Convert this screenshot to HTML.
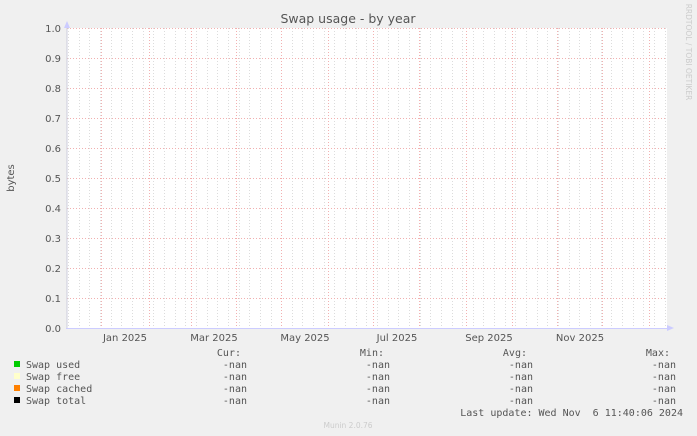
<!DOCTYPE html>
<html><head><meta charset="utf-8"><style>
html,body{margin:0;padding:0;background:#f0f0f0;}
svg{display:block}
text{font-family:"DejaVu Sans","Liberation Sans",sans-serif;fill:#555}
.m{font-family:"DejaVu Sans Mono","Liberation Mono",monospace;font-size:10px;fill:#555;white-space:pre}
</style></head><body>
<svg id="s" width="697" height="436" xmlns="http://www.w3.org/2000/svg">
<rect x="67" y="28" width="600" height="300" fill="#fff"/>
<g id="g"></g>
<line x1="67" y1="24" x2="67" y2="329" stroke="#ccd" stroke-width="1"/>
<line x1="66" y1="328.5" x2="670" y2="328.5" stroke="#ccf" stroke-width="1"/>
<polygon points="64,28 70,28 67,21" fill="#ccf"/>
<polygon points="667,325 667,331 674,328" fill="#ccf"/>
<text x="348" y="23" font-size="12.5" text-anchor="middle">Swap usage - by year</text>
<g font-size="10" text-anchor="end">
<text x="61" y="32">1.0</text><text x="61" y="62">0.9</text><text x="61" y="92">0.8</text><text x="61" y="122">0.7</text><text x="61" y="152">0.6</text><text x="61" y="182">0.5</text><text x="61" y="212">0.4</text><text x="61" y="242">0.3</text><text x="61" y="272">0.2</text><text x="61" y="302">0.1</text><text x="61" y="332">0.0</text>
</g>
<text x="14" y="178" font-size="10" text-anchor="middle" transform="rotate(-90 14 178)">bytes</text>
<g font-size="10" text-anchor="middle">
<text x="125" y="341">Jan 2025</text><text x="214" y="341">Mar 2025</text><text x="305" y="341">May 2025</text><text x="397" y="341">Jul 2025</text><text x="489" y="341">Sep 2025</text><text x="580" y="341">Nov 2025</text>
</g>
<text x="686" y="52" font-size="7.5" style="fill:#ccc" text-anchor="middle" transform="rotate(90 686 52)">RRDTOOL / TOBI OETIKER</text>
<rect x="14" y="361" width="6" height="6" fill="#00cc00"/>
<rect x="14" y="373" width="6" height="6" fill="#ffffcc"/>
<rect x="14" y="385" width="6" height="6" fill="#ff8000"/>
<rect x="14" y="397" width="6" height="6" fill="#000"/>
<text class="m" x="26" y="368">Swap used</text>
<text class="m" x="26" y="380">Swap free</text>
<text class="m" x="26" y="392">Swap cached</text>
<text class="m" x="26" y="404">Swap total</text>
<g class="m" text-anchor="end">
<text class="m" x="241" y="356">Cur:</text><text class="m" x="384" y="356">Min:</text><text class="m" x="527" y="356">Avg:</text><text class="m" x="670" y="356">Max:</text>
</g>
<g id="nan"></g>
<text class="m" x="683" y="416" text-anchor="end" xml:space="preserve">Last update: Wed Nov  6 11:40:06 2024</text>
<text x="348" y="428" font-size="7.5" style="fill:#ccc" text-anchor="middle">Munin 2.0.76</text>
</svg>
<script>
var ns="http://www.w3.org/2000/svg",g=document.getElementById("g");
function L(x1,y1,x2,y2,c){var l=document.createElementNS(ns,"line");l.setAttribute("x1",x1);l.setAttribute("y1",y1);l.setAttribute("x2",x2);l.setAttribute("y2",y2);l.setAttribute("stroke",c);l.setAttribute("stroke-width","1");l.setAttribute("stroke-dasharray","1,2");g.appendChild(l);}
for(var x=68.15;x<667;x+=10.65){var xx=Math.round(x)+0.5;L(xx,28,xx,328,"#dcdcdc");}
for(var y=28;y<=328;y+=30)L(67,y+0.5,667,y+0.5,"#dcdcdc");
[101,149,191,236,281,328,373,419,466,512,557,602,649].forEach(function(x){L(x+0.5,28,x+0.5,328,"#f2b0b0");});
for(var y=28;y<328;y+=30)L(67,y+0.5,667,y+0.5,"#f2b0b0");
var n=document.getElementById("nan");
[247,390,533,676].forEach(function(x){[368,380,392,404].forEach(function(y){var t=document.createElementNS(ns,"text");t.setAttribute("x",x);t.setAttribute("y",y);t.setAttribute("class","m");t.setAttribute("text-anchor","end");t.textContent="-nan";n.appendChild(t);});});
</script>
</body></html>
